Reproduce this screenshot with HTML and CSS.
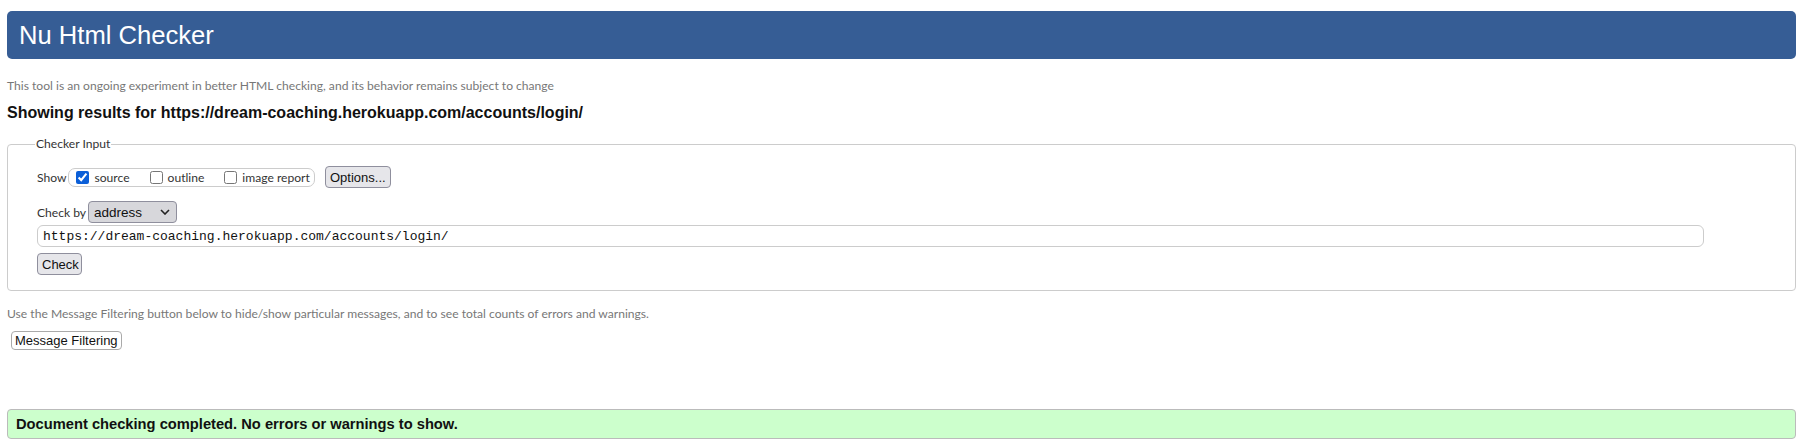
FILE: index.html
```html
<!DOCTYPE html>
<html lang="en">
<head>
<meta charset="utf-8">
<title>Showing results for https://dream-coaching.herokuapp.com/accounts/login/ - Nu Html Checker</title>
<link rel="stylesheet" href="styles.css">
</head>
<body>
<div class="page">
  <h1 class="title">Nu Html Checker</h1>
  <p class="tagline">This tool is an ongoing experiment in better HTML checking, and its behavior remains subject to change</p>
  <h2 class="results-for">Showing results for https://dream-coaching.herokuapp.com/accounts/login/</h2>
  <fieldset class="checker-input">
    <legend class="legend">Checker Input</legend>
    <div class="row row-show">
      <span class="label">Show</span>
      <span class="group">
        <label class="opt"><input type="checkbox" class="cb" checked>source</label>
        <label class="opt"><input type="checkbox" class="cb">outline</label>
        <label class="opt"><input type="checkbox" class="cb">image report</label>
      </span>
      <button class="btn btn-options" type="button">Options...</button>
    </div>
    <div class="row row-by">
      <span class="label">Check by</span>
      <span class="select">
        <span class="select-text">address</span>
        <svg class="chev" width="10" height="6" viewBox="0 0 10 6"><path d="M1 1 L5 5 L9 1" fill="none" stroke="#222" stroke-width="1.6"/></svg>
      </span>
    </div>
    <div class="row row-url">
      <input class="url" type="text" value="https://dream-coaching.herokuapp.com/accounts/login/">
    </div>
    <div class="row row-check">
      <button class="btn btn-check" type="submit">Check</button>
    </div>
  </fieldset>
  <p class="filter-note">Use the Message Filtering button below to hide/show particular messages, and to see total counts of errors and warnings.</p>
  <button class="btn-filter" type="button">Message Filtering</button>
  <p class="success">Document checking completed. No errors or warnings to show.</p>
</div>
</body>
</html>
```
FILE: styles.css
```css
html, body {
  margin: 0;
  padding: 0;
  background: #fff;
}
.page {
  padding: 11px 6px 0 7px;
  font-family: "Lato", "Open Sans", sans-serif;
  color: #333;
}
.title {
  margin: 0;
  height: 48px;
  box-sizing: border-box;
  padding: 0 0 0 12px;
  background: #365d95;
  border-radius: 5px;
  color: #fff;
  font-family: "Liberation Sans", Arial, sans-serif;
  font-weight: normal;
  font-size: 25.6px;
  line-height: 48px;
}
.tagline {
  margin: 19px 0 0 0;
  font-size: 12.1px;
  line-height: 16px;
  color: #777;
}
.results-for {
  margin: 9px 0 0 0;
  font-family: "Liberation Sans", Arial, sans-serif;
  font-weight: bold;
  font-size: 16px;
  line-height: 20px;
  color: #111;
}
.checker-input {
  margin: 13px 0 0 0;
  padding: 14px 0 15px 29px;
  border: 1px solid #ccc;
  border-radius: 4px;
  min-width: 0;
}
.legend {
  margin-left: -2px;
  padding: 0 1px;
  font-size: 12.1px;
  line-height: 16px;
  color: #333;
}
.row {
  display: flex;
  align-items: center;
}
.label {
  font-size: 12.1px;
  color: #333;
}
.row-show {
  height: 22px;
}
.group {
  display: flex;
  align-items: center;
  height: 17px;
  margin-left: 2px;
  padding: 0 4px 0 4px;
  border: 1px solid #ccc;
  border-radius: 7px;
  gap: 17px;
}
.opt {
  display: flex;
  align-items: center;
  font-size: 12.1px;
  color: #333;
  white-space: pre;
}
.cb {
  margin: 0 5px 0 3px;
  width: 13px;
  height: 13px;
  accent-color: #0b5fd8;
}
.btn {
  font-family: "Liberation Sans", Arial, sans-serif;
  font-size: 13px;
  color: #111;
  background: #e6e6ea;
  border: 1px solid #8f8f9d;
  border-radius: 4px;
  padding: 0 4px;
  height: 22px;
}
.btn-options {
  margin-left: 10px;
  width: 66px;
}
.row-by {
  margin-top: 13px;
  height: 22px;
}
.select {
  display: flex;
  align-items: center;
  justify-content: space-between;
  box-sizing: border-box;
  width: 89px;
  height: 22px;
  margin-left: 2px;
  padding: 0 6px 0 5px;
  background: #d7d7db;
  border: 1px solid #8f8f9d;
  border-radius: 4px;
  font-family: "Liberation Sans", Arial, sans-serif;
  font-size: 13.5px;
  color: #111;
}
.row-url {
  margin-top: 2px;
}
.url {
  box-sizing: border-box;
  width: 1667px;
  height: 22px;
  margin: 0;
  padding: 0 5px;
  border: 1px solid #ccc;
  border-radius: 6px;
  font-family: "Liberation Mono", monospace;
  font-size: 13px;
  color: #111;
  outline: none;
}
.row-check {
  margin-top: 6px;
}
.btn-check {
  width: 45px;
}
.filter-note {
  margin: 15px 0 0 0;
  font-size: 12.1px;
  line-height: 16px;
  color: #777;
}
.btn-filter {
  display: block;
  margin: 9px 0 0 4px;
  height: 19px;
  padding: 0 3px;
  background: #fff;
  border: 1px solid #aaa;
  border-radius: 4px;
  font-family: "Liberation Sans", Arial, sans-serif;
  font-size: 13px;
  color: #111;
}
.success {
  margin: 59px 0 0 0;
  height: 30px;
  box-sizing: border-box;
  padding: 0 8px;
  background: #ccffcc;
  border: 1px solid #bbb;
  border-radius: 4px;
  font-family: "Liberation Sans", Arial, sans-serif;
  font-weight: bold;
  font-size: 14.7px;
  line-height: 28px;
  color: #111;
}
```
